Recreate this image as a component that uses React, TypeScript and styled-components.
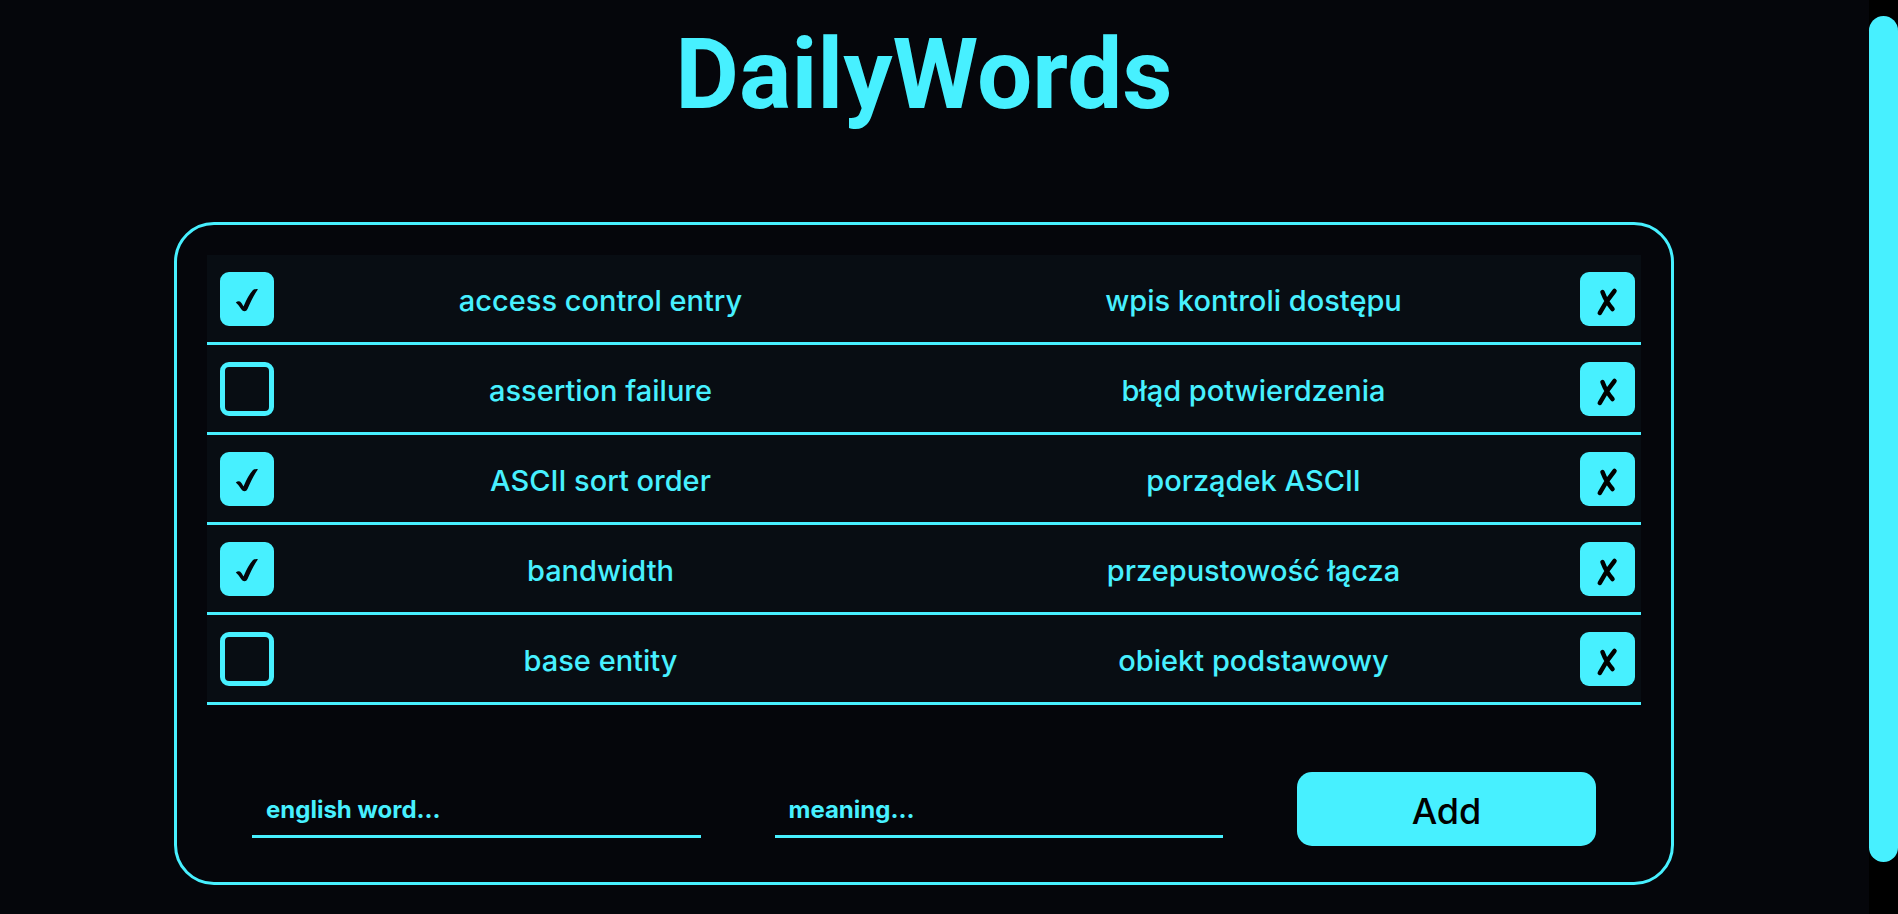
import React, { useState } from 'react';
import styled, { createGlobalStyle } from 'styled-components';

const accent = '#47f0ff';
const ink = '#05060b';
const font = '"Comic Sans MS", Inter, "Noto Sans", sans-serif';
const titleFont = '"Comic Sans MS", Roboto, "Noto Sans", sans-serif';

const GlobalStyle = createGlobalStyle`
  *, *::before, *::after { box-sizing: border-box; }
  body { margin: 0; background: ${ink}; color: ${accent}; font-family: ${font}; }
`;

const Shell = styled.div`
  display: flex;
  min-height: 100vh;
`;

const Page = styled.main`
  flex: 1;
  min-width: 0;
  padding: 0 195px 28px 174px;
`;

const ScrollTrack = styled.div`
  display: flex;
  width: 29px;
  padding: 16px 0 52px;
  background: #000;
`;

const ScrollThumb = styled.div`
  flex: 1;
  border-radius: 15px;
  background: ${accent};
`;

const Title = styled.h1`
  margin: 0;
  padding: 8px 0 80px;
  font-family: ${titleFont};
  font-size: 98px;
  line-height: 134px;
  font-weight: 700;
  text-align: center;
`;

const Card = styled.section`
  padding: 30px 30px 36px;
  border: 3px solid ${accent};
  border-radius: 40px;
`;

const WordList = styled.ul`
  margin: 0;
  padding: 0;
  list-style: none;
`;

const WordRow = styled.li`
  display: flex;
  align-items: center;
  height: 90px;
  padding: 0 6px 0 13px;
  border-bottom: 3px solid ${accent};
  background: #080d13;
`;

const Word = styled.span`
  flex: 1 1 0;
  padding-top: 4px;
  font-size: 29px;
  font-weight: 500;
  line-height: 42px;
  text-align: center;
`;

const CheckWrap = styled.label`
  display: grid;
  width: 54px;
  height: 54px;
  cursor: pointer;
  > * { grid-area: 1 / 1; }
  svg { pointer-events: none; }
`;

const CheckInput = styled.input`
  appearance: none;
  width: 54px;
  height: 54px;
  margin: 0;
  border: 5px solid ${accent};
  border-radius: 9px;
  cursor: pointer;
  &:checked { background: ${accent}; }
`;

const DeleteButton = styled.button`
  width: 55px;
  height: 54px;
  padding: 0;
  border: 0;
  border-radius: 9px;
  background: ${accent};
  cursor: pointer;
  svg { display: block; }
`;

const AddForm = styled.form`
  display: grid;
  grid-template-columns: 3fr 3fr 2fr;
  gap: 74px;
  margin-top: 67px;
  padding: 0 45px;
`;

const Field = styled.input`
  align-self: center;
  width: 100%;
  min-width: 0;
  height: 58px;
  padding: 4px 14px 0;
  border: 0;
  border-bottom: 3px solid ${accent};
  background: transparent;
  color: ${accent};
  font: 700 24px/32px ${font};
  outline: 0;
  &::placeholder { color: ${accent}; opacity: 1; }
`;

const AddButton = styled.button`
  height: 74px;
  padding: 4px 0 0;
  border: 0;
  border-radius: 15px;
  background: ${accent};
  color: #000;
  font: 500 36px/48px ${font};
  cursor: pointer;
`;

const CheckIcon = () => (
  <svg width="54" height="54" viewBox="0 0 54 54" aria-hidden="true">
    <path d="M15.800 30.500 Q18 28.500 20 29.500 Q21.500 30.500 23.500 34.500 Q28 23.500 33 18 Q35 16.800 38 17.200 Q33 24 27.500 37 Q26.500 39.300 24.500 39.300 Q22.500 39.300 21.500 37.500 Q18.500 32.500 15.800 30.500Z" fill={ink} />
  </svg>
);

const CrossIcon = () => (
  <svg width="55" height="54" viewBox="0 0 55 54" aria-hidden="true">
    <path d="M22.500 20 Q26 29.500 32.500 37 M34.500 19 Q26 29 19.800 41" fill="none" stroke="#000" strokeWidth="4.500" strokeLinecap="round" />
  </svg>
);

type Entry = { word: string; meaning: string; known: boolean };

const initialWords: Entry[] = [
  { word: 'access control entry', meaning: 'wpis kontroli dostępu', known: true },
  { word: 'assertion failure', meaning: 'błąd potwierdzenia', known: false },
  { word: 'ASCII sort order', meaning: 'porządek ASCII', known: true },
  { word: 'bandwidth', meaning: 'przepustowość łącza', known: true },
  { word: 'base entity', meaning: 'obiekt podstawowy', known: false },
];

export default function App() {
  const [words, setWords] = useState(initialWords);
  const [word, setWord] = useState('');
  const [meaning, setMeaning] = useState('');

  const toggle = (index: number) =>
    setWords(words.map((w, i) => (i === index ? { ...w, known: !w.known } : w)));
  const remove = (index: number) => setWords(words.filter((_, i) => i !== index));
  const add = (event: React.FormEvent) => {
    event.preventDefault();
    if (!word || !meaning) return;
    setWords([...words, { word, meaning, known: false }]);
    setWord('');
    setMeaning('');
  };

  return (
    <>
      <GlobalStyle />
      <Shell>
        <Page>
          <Title>DailyWords</Title>
          <Card>
            <WordList>
              {words.map((entry, i) => (
                <WordRow key={entry.word}>
                  <CheckWrap>
                    <CheckInput
                      type="checkbox"
                      aria-label={entry.word}
                      checked={entry.known}
                      onChange={() => toggle(i)}
                    />
                    {entry.known && <CheckIcon />}
                  </CheckWrap>
                  <Word>{entry.word}</Word>
                  <Word lang="pl">{entry.meaning}</Word>
                  <DeleteButton type="button" aria-label={`Delete ${entry.word}`} onClick={() => remove(i)}>
                    <CrossIcon />
                  </DeleteButton>
                </WordRow>
              ))}
            </WordList>
            <AddForm onSubmit={add}>
              <Field aria-label="english word" placeholder="english word..." value={word} onChange={(e) => setWord(e.target.value)} />
              <Field aria-label="meaning" placeholder="meaning..." value={meaning} onChange={(e) => setMeaning(e.target.value)} />
              <AddButton type="submit">Add</AddButton>
            </AddForm>
          </Card>
        </Page>
        <ScrollTrack aria-hidden="true">
          <ScrollThumb />
        </ScrollTrack>
      </Shell>
    </>
  );
}
